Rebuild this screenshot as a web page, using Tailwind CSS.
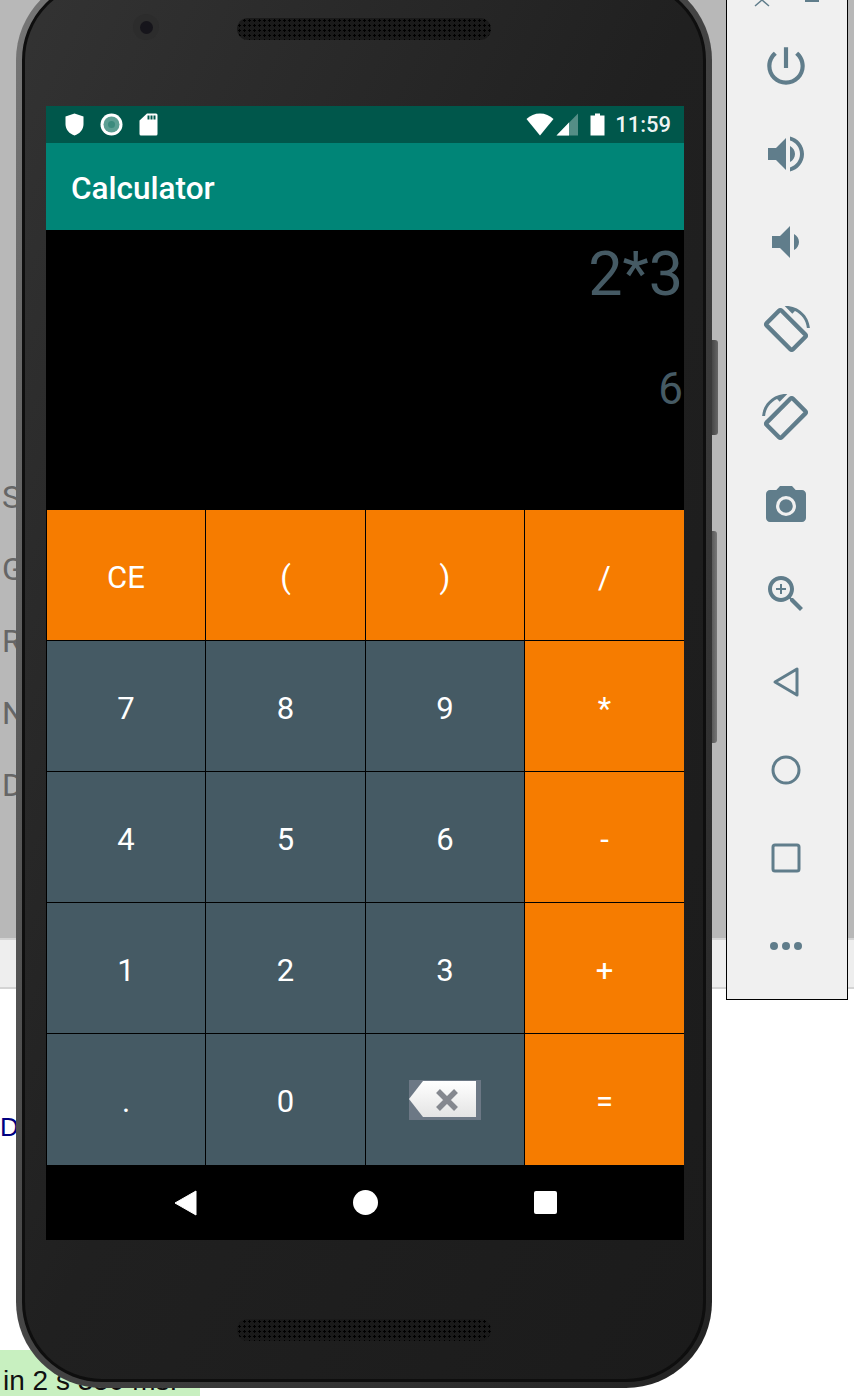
<!DOCTYPE html>
<html lang="en">
<head>
  <meta charset="UTF-8">
  <title>Calculator</title>
  <script src="https://cdn.jsdelivr.net/npm/@tailwindcss/browser@4"></script>
</head>
<body class="bg-white">
<div class="relative w-[854px] h-[1396px] overflow-hidden font-['Roboto',sans-serif]">

  <!-- desktop behind the emulator -->
  <div class="flex flex-col h-full">
    <div class="h-[938px] bg-[#b8b8b8] flex flex-col pt-[461px] pl-[2px] text-[32px] leading-[72px] text-[#666]">
      <div>S</div><div>G</div><div>R</div><div>N</div><div>D</div>
    </div>
    <div class="h-[51px] bg-[#eeeeee] border-y-2 border-[#d4d4d4]"></div>
    <div class="flex-1 bg-white flex flex-col">
      <div class="pt-[123px] text-[26px] leading-[30px] text-[#000080] font-['Liberation_Sans',sans-serif]">D</div>
      <div class="mt-auto w-[200px] h-[46px] bg-[#c8f0c0] pl-[3px] pt-[14px] text-[28px] leading-[34px] text-[#111] whitespace-nowrap font-['Liberation_Sans',sans-serif]">in 2 s 350 ms.</div>
    </div>
  </div>

  <!-- side buttons -->
  <div class="absolute left-[708px] top-[340px] w-[10px] h-[95px] rounded-r-[3px] bg-gradient-to-r from-[#333] to-[#666]"></div>
  <div class="absolute left-[708px] top-[531px] w-[9px] h-[212px] rounded-r-[3px] bg-gradient-to-r from-[#444] to-[#777]"></div>

  <!-- phone -->
  <div class="absolute left-[16px] top-[-26px] w-[696px] h-[1414px] rounded-[86px] p-[6px] bg-gradient-to-br from-[#777777] via-[#444444] to-[#222222]">
    <div class="relative w-full h-full rounded-[80px] border-[3px] border-[#0e0e0e] bg-gradient-to-br from-[#333333] via-[#202020] to-[#1b1b1b] flex flex-col items-center">

      <div class="absolute left-[108px] top-[31px] w-[26px] h-[26px] rounded-full bg-[#2c2c2c] flex items-center justify-center">
        <div class="w-[13px] h-[13px] rounded-full bg-[#16151b]"></div>
      </div>
      <div class="mt-[35px] w-[254px] h-[22px] rounded-full bg-[#1a1a1a] bg-[radial-gradient(circle,#000_1px,transparent_1.2px)] bg-[length:5px_5px]"></div>

      <!-- screen -->
      <div class="mt-[66px] ml-[2px] w-[638px] h-[1134px] flex flex-col bg-black">
        <!-- status bar -->
        <div class="h-[37px] bg-[#00574b] flex items-center pl-[19px] pr-[13px]">
          <svg class="w-[19px] h-[23px]" viewBox="0 0 19 23"><path d="M9.5 0.5 L18.5 3.5 V11 C18.5 16.5 14.5 21 9.5 22.5 C4.5 21 0.5 16.5 0.5 11 V3.5 Z" fill="#fff"/></svg>
          <svg class="ml-[16px] w-[23px] h-[23px]" viewBox="0 0 23 23"><circle cx="11.5" cy="11.5" r="11" fill="#fff"/><circle cx="11.5" cy="11.5" r="8" fill="#5d9f93"/><circle cx="11.5" cy="11.5" r="3.5" fill="#3c8b7d"/></svg>
          <svg class="ml-[16px] w-[19px] h-[23px]" viewBox="0 0 19 23"><path d="M8 0.5 H17 Q18.5 0.5 18.5 2 V21 Q18.5 22.5 17 22.5 H2 Q0.5 22.5 0.5 21 V7.5 Z" fill="#fff"/><path d="M8.5 2.5h2v4h-2zM11.5 2.5h2v4h-2zM14.5 2.5h2v4h-2z" fill="#00574b"/></svg>
          <svg class="ml-auto w-[28px] h-[23px]" viewBox="0 0 28 23"><path d="M14 22.5 L0.5 6 C4 2.5 9 0.5 14 0.5 S24 2.5 27.5 6 Z" fill="#fff"/></svg>
          <svg class="ml-[2px] w-[23px] h-[23px]" viewBox="0 0 23 23"><path d="M22 0.5 V22.5 H0.5 Z" fill="#fff" fill-opacity="0.33"/><path d="M13 9.5 V22.5 H0.5 Z" fill="#fff"/></svg>
          <svg class="ml-[11px] w-[15px] h-[23px]" viewBox="0 0 15 23"><path d="M5 0.5 H10 V2.5 H14.5 V22.5 H0.5 V2.5 H5 Z" fill="#fff"/></svg>
          <span class="ml-[10px] text-[22px] leading-none font-medium text-white/95">11:59</span>
        </div>
        <!-- app bar -->
        <div class="h-[87px] bg-[#008577] flex items-center pl-[25px] pt-[4px] text-[31.5px] font-medium text-white">Calculator</div>
        <!-- display -->
        <div class="h-[280px] bg-black flex flex-col items-end pr-px text-[#455a64]">
          <div class="mt-[9px] text-[61px] leading-[70px]">2*3</div>
          <div class="mt-[55px] text-[44px] leading-[50px]">6</div>
        </div>
        <!-- keypad -->
        <div class="h-[655px] grid grid-cols-[158px_159px_158px_159px] grid-rows-[130px_130px_130px_130px_131px] gap-px pl-px bg-black text-[31px] text-white">
          <div class="bg-[#f67c00] pt-[6px] flex items-center justify-center">CE</div>
          <div class="bg-[#f67c00] pt-[6px] flex items-center justify-center">(</div>
          <div class="bg-[#f67c00] pt-[6px] flex items-center justify-center">)</div>
          <div class="bg-[#f67c00] pt-[6px] flex items-center justify-center">/</div>
          <div class="bg-[#455a64] pt-[6px] flex items-center justify-center">7</div>
          <div class="bg-[#455a64] pt-[6px] flex items-center justify-center">8</div>
          <div class="bg-[#455a64] pt-[6px] flex items-center justify-center">9</div>
          <div class="bg-[#f67c00] pt-[6px] flex items-center justify-center">*</div>
          <div class="bg-[#455a64] pt-[6px] flex items-center justify-center">4</div>
          <div class="bg-[#455a64] pt-[6px] flex items-center justify-center">5</div>
          <div class="bg-[#455a64] pt-[6px] flex items-center justify-center">6</div>
          <div class="bg-[#f67c00] pt-[6px] flex items-center justify-center">-</div>
          <div class="bg-[#455a64] pt-[6px] flex items-center justify-center">1</div>
          <div class="bg-[#455a64] pt-[6px] flex items-center justify-center">2</div>
          <div class="bg-[#455a64] pt-[6px] flex items-center justify-center">3</div>
          <div class="bg-[#f67c00] pt-[6px] flex items-center justify-center">+</div>
          <div class="bg-[#455a64] pt-[6px] flex items-center justify-center">.</div>
          <div class="bg-[#455a64] pt-[6px] flex items-center justify-center">0</div>
          <div class="bg-[#455a64] flex items-center justify-center">
            <svg class="w-[72px] h-[40px]" viewBox="0 0 72 40">
              <defs><linearGradient id="keycap" x1="0" y1="0" x2="0" y2="1"><stop offset="0" stop-color="#ffffff"/><stop offset="1" stop-color="#e4e4e4"/></linearGradient></defs>
              <rect width="72" height="40" fill="#6c7885"/>
              <path d="M14 1 H67 V37 H14 L0 19 Z" fill="url(#keycap)"/>
              <path d="M29 11 L47 29 M47 11 L29 29" stroke="#85888f" stroke-width="5.5"/>
            </svg>
          </div>
          <div class="bg-[#f67c00] pt-[6px] flex items-center justify-center">=</div>
        </div>
        <!-- nav bar -->
        <div class="h-[75px] bg-black flex items-center justify-center">
          <div class="w-[180px] flex justify-center">
            <svg class="w-[23px] h-[26px]" viewBox="0 0 23 26"><path d="M22 1 V25 L1 13 Z" fill="#fff" stroke="#fff" stroke-linejoin="round"/></svg>
          </div>
          <div class="w-[180px] flex justify-center">
            <div class="w-[25px] h-[25px] rounded-full bg-white"></div>
          </div>
          <div class="w-[180px] flex justify-center">
            <div class="w-[23px] h-[23px] rounded-[2px] bg-white"></div>
          </div>
        </div>
      </div>

      <div class="mt-[79px] w-[254px] h-[22px] rounded-full bg-[#1a1a1a] bg-[radial-gradient(circle,#000_1px,transparent_1.2px)] bg-[length:5px_5px]"></div>
    </div>
  </div>

  <!-- emulator toolbar -->
  <div class="absolute left-[726px] top-[-8px] w-[122px] h-[1008px] bg-[#f0f0f0] border border-black flex flex-col items-center pr-[2px] text-[#607d8b]">
    <div class="h-[29px] w-full relative">
      <svg class="absolute left-[27px] top-[6px] w-[16px] h-[8px]" viewBox="0 0 16 8"><path d="M1 7 L8 1 L15 7" fill="none" stroke="#607d8b" stroke-width="1.5"/></svg>
      <div class="absolute left-[78px] top-[7px] w-[14px] h-[2px] bg-[#607d8b]"></div>
    </div>
    <div class="h-[88px] flex items-center justify-center">
      <svg class="w-[50px] h-[50px]" viewBox="0 0 24 24" fill="currentColor"><path d="M13 3h-2v10h2V3zm4.83 2.17l-1.42 1.42C17.99 7.86 19 9.81 19 12c0 3.87-3.13 7-7 7s-7-3.13-7-7c0-2.19 1.01-4.14 2.58-5.42L6.17 5.17C4.23 6.82 3 9.26 3 12c0 4.97 4.03 9 9 9s9-4.03 9-9c0-2.74-1.23-5.18-3.17-6.83z"/></svg>
    </div>
    <div class="h-[88px] flex items-center justify-center">
      <svg class="w-[48px] h-[48px]" viewBox="0 0 24 24" fill="currentColor"><path d="M3 9v6h4l5 5V4L7 9H3zm13.5 3c0-1.77-1.02-3.29-2.5-4.03v8.05c1.48-.73 2.5-2.25 2.5-4.02zM14 3.23v2.06c2.89.86 5 3.54 5 6.71s-2.11 5.85-5 6.71v2.06c4.01-.91 7-4.49 7-8.77s-2.99-7.86-7-8.77z"/></svg>
    </div>
    <div class="h-[88px] flex items-center justify-center">
      <svg class="w-[48px] h-[48px]" viewBox="0 0 24 24" fill="currentColor"><path d="M18.5 12c0-1.77-1.02-3.29-2.5-4.03v8.05c1.48-.73 2.5-2.25 2.5-4.02zM5 9v6h4l5 5V4L9 9H5z"/></svg>
    </div>
    <div class="h-[88px] flex items-center justify-center">
      <svg class="w-[48px] h-[48px]" viewBox="0 0 24 24" fill="currentColor"><path d="M16.48 2.52c3.27 1.55 5.61 4.72 5.97 8.48h1.5C23.44 4.84 18.29 0 12 0l-.66.03 3.81 3.81 1.33-1.32z"/><path stroke="currentColor" stroke-width="0.7" d="M10.23 1.75c-.59-.59-1.54-.59-2.12 0L1.75 8.11c-.59.59-.59 1.54 0 2.12l12.02 12.02c.59.59 1.54.59 2.12 0l6.36-6.36c.59-.59.59-1.54 0-2.12L10.23 1.75zm4.6 19.44L2.81 9.17l6.36-6.36 12.02 12.02-6.36 6.36z"/></svg>
    </div>
    <div class="h-[88px] flex items-center justify-center">
      <svg class="w-[48px] h-[48px] -scale-x-100" viewBox="0 0 24 24" fill="currentColor"><path d="M16.48 2.52c3.27 1.55 5.61 4.72 5.97 8.48h1.5C23.44 4.84 18.29 0 12 0l-.66.03 3.81 3.81 1.33-1.32z"/><path stroke="currentColor" stroke-width="0.7" d="M10.23 1.75c-.59-.59-1.54-.59-2.12 0L1.75 8.11c-.59.59-.59 1.54 0 2.12l12.02 12.02c.59.59 1.54.59 2.12 0l6.36-6.36c.59-.59.59-1.54 0-2.12L10.23 1.75zm4.6 19.44L2.81 9.17l6.36-6.36 12.02 12.02-6.36 6.36z"/></svg>
    </div>
    <div class="h-[88px] flex items-center justify-center">
      <svg class="w-[48px] h-[48px]" viewBox="0 0 24 24"><path d="M9 2 7.17 4H4c-1.1 0-2 .9-2 2v12c0 1.1.9 2 2 2h16c1.1 0 2-.9 2-2V6c0-1.1-.9-2-2-2h-3.17L15 2H9z" fill="currentColor"/><circle cx="12" cy="12" r="4.2" fill="currentColor" stroke="#f0f0f0" stroke-width="1.6"/></svg>
    </div>
    <div class="h-[88px] flex items-center justify-center">
      <svg class="w-[48px] h-[48px]" viewBox="0 0 24 24" fill="currentColor"><path d="M15.5 14h-.79l-.28-.27C15.41 12.59 16 11.11 16 9.5 16 5.91 13.09 3 9.5 3S3 5.91 3 9.5 5.91 16 9.5 16c1.61 0 3.09-.59 4.23-1.57l.27.28v.79l5 4.99L20.49 19l-4.99-5zm-6 0C7.01 14 5 11.99 5 9.5S7.01 5 9.5 5 14 7.01 14 9.5 11.99 14 9.5 14z"/><path d="M12 10h-2v2H9v-2H7V9h2V7h1v2h2v1z"/></svg>
    </div>
    <div class="h-[88px] flex items-center justify-center">
      <svg class="w-[28px] h-[34px]" viewBox="0 0 28 34"><path d="M25 4 V30 L3 17 Z" fill="none" stroke="currentColor" stroke-width="3" stroke-linejoin="round"/></svg>
    </div>
    <div class="h-[88px] flex items-center justify-center">
      <svg class="w-[30px] h-[30px]" viewBox="0 0 30 30"><circle cx="15" cy="15" r="13" fill="none" stroke="currentColor" stroke-width="3"/></svg>
    </div>
    <div class="h-[88px] flex items-center justify-center">
      <svg class="w-[30px] h-[30px]" viewBox="0 0 30 30"><rect x="2" y="2" width="26" height="26" rx="2" fill="none" stroke="currentColor" stroke-width="3"/></svg>
    </div>
    <div class="h-[88px] flex items-center justify-center gap-[4px]">
      <div class="w-[8px] h-[8px] rounded-full bg-[#607d8b]"></div>
      <div class="w-[8px] h-[8px] rounded-full bg-[#607d8b]"></div>
      <div class="w-[8px] h-[8px] rounded-full bg-[#607d8b]"></div>
    </div>
  </div>
</div>
</body>
</html>
